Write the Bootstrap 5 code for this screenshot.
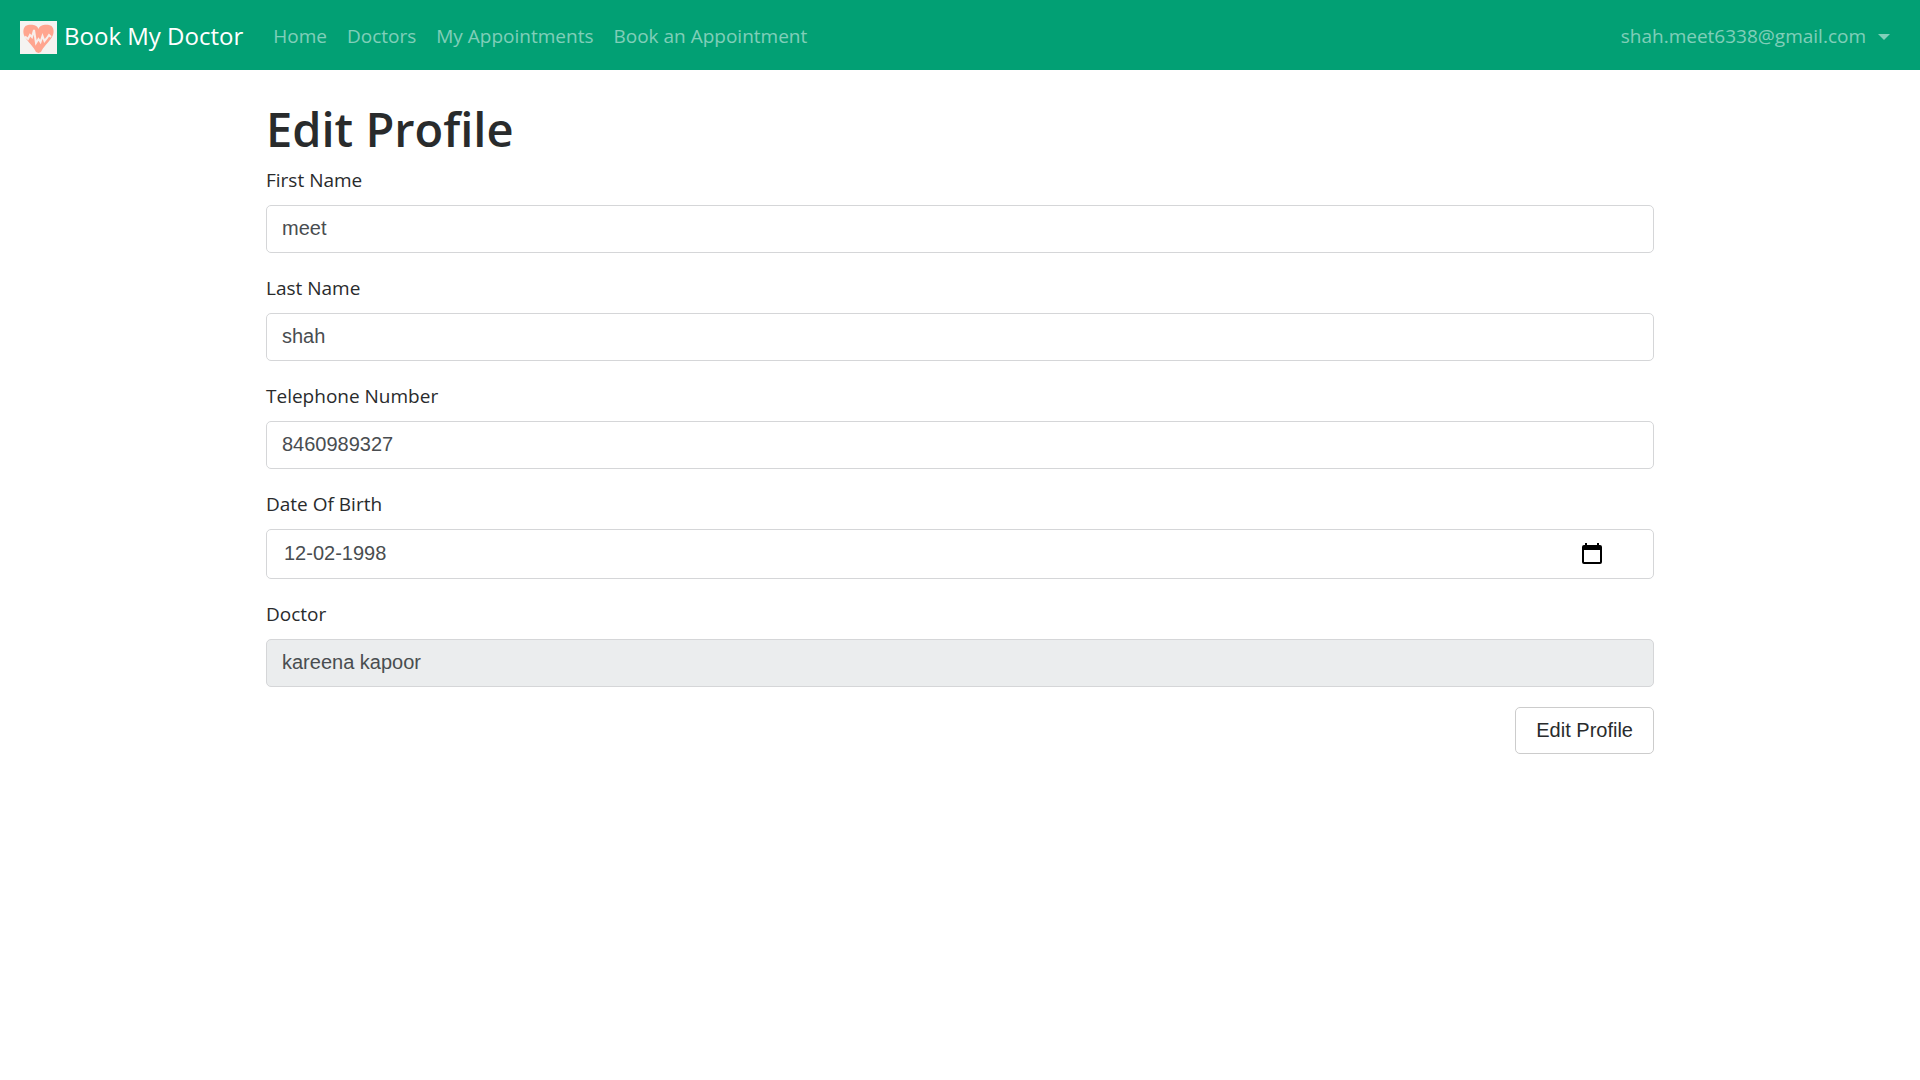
<!DOCTYPE html>
<html lang="en">
<head>
<meta charset="utf-8">
<meta name="viewport" content="width=device-width, initial-scale=1">
<title>Book My Doctor - Edit Profile</title>
<link href="https://cdn.jsdelivr.net/npm/bootstrap@5.3.0/dist/css/bootstrap.min.css" rel="stylesheet">
<style>
  body { font-family: "Segoe UI", "Open Sans", sans-serif; font-size: 19px; line-height: 30px; color: #292b2c; }
  .site-nav { background: #02a074; padding: 11px 20px 9px; --bs-navbar-nav-link-padding-x: 10px; }
  .site-nav .navbar-brand { font-size: 24px; line-height: 38px; padding: 6px 0; margin-right: 20px; gap: 7px; }
  .site-nav .nav-link { padding-top: 10px; padding-bottom: 10px; color: rgba(255, 255, 255, .5); }
  .site-nav .nav-link:hover { color: rgba(255, 255, 255, .75); }
  .site-nav .dropdown-toggle::after { margin-left: 12px; vertical-align: 3px; border-width: 6px; border-bottom: 0; }
  .brand-logo { width: 37px; height: 33px; margin-top: 3px; }
  .profile-page { max-width: 1424px; padding: 30px 18px; }
  .profile-title { font-size: 47px; font-weight: 600; line-height: 58px; margin-bottom: 7px; }
  .field-group { margin-bottom: 20px; }
  .field-group .form-label { display: block; margin-bottom: 10px; }
  .field-group .form-control { font: 20px/30px "Liberation Sans", Arial, sans-serif; color: #494d50; border-color: #d5d6d8; border-radius: 5px; padding: 7px 15px 9px; }
  .field-group .form-control:disabled { background: #ebedee; opacity: 1; }
  .field-group .date-control { padding: 8px 90px 10px 17px; }
  .calendar-btn { right: 48px; }
  .save-btn { font: 20px/30px "Liberation Sans", Arial, sans-serif; color: #292b2c; background: #fff; border-color: #ccc; border-radius: 5px; padding: 7px 20px 8px; }
</style>
<script src="https://cdn.jsdelivr.net/npm/bootstrap@5.3.0/dist/js/bootstrap.bundle.min.js" defer></script>
</head>
<body>
<nav class="navbar navbar-expand-lg navbar-dark site-nav">
  <a class="navbar-brand d-flex align-items-center" href="#">
    <svg class="brand-logo" viewBox="0 0 37 33" aria-hidden="true">
      <rect width="37" height="33" fill="#f5f3f1"/>
      <path d="M18.500 8C17 3 9 3 5.500 5C2.500 8 3 13 5 16C8 21 14 26 16 31L18.500 32L21 31C23 26 29 21 32 16C34 13 34.500 8 31.500 5C28 3 20 3 18.500 8Z" fill="#ffa58f"/>
      <path d="M5 15.500L8 18L10 14L12 16L14 9L16 22L18.500 18L20.500 21L22.500 15L24.500 20L27 17L29 14L31 16" fill="none" stroke="#f8eeeb" stroke-width="2"/>
    </svg>
    <span>Book My Doctor</span>
  </a>
  <button class="navbar-toggler" type="button" data-bs-toggle="collapse" data-bs-target="#mainNav" aria-controls="mainNav" aria-expanded="false" aria-label="Toggle navigation"><span class="navbar-toggler-icon"></span></button>
  <div class="collapse navbar-collapse" id="mainNav">
    <ul class="navbar-nav me-auto">
      <li class="nav-item"><a class="nav-link" href="#">Home</a></li>
      <li class="nav-item"><a class="nav-link" href="#">Doctors</a></li>
      <li class="nav-item"><a class="nav-link" href="#">My Appointments</a></li>
      <li class="nav-item"><a class="nav-link" href="#">Book an Appointment</a></li>
    </ul>
    <ul class="navbar-nav">
      <li class="nav-item dropdown">
        <a class="nav-link dropdown-toggle" href="#" role="button" data-bs-toggle="dropdown" aria-expanded="false">shah.meet6338@gmail.com</a>
        <ul class="dropdown-menu dropdown-menu-end"></ul>
      </li>
    </ul>
  </div>
</nav>
<main class="container-fluid profile-page">
  <h1 class="profile-title">Edit Profile</h1>
  <form>
    <div class="field-group">
      <label class="form-label" for="firstName">First Name</label>
      <input class="form-control" type="text" id="firstName" value="meet">
    </div>
    <div class="field-group">
      <label class="form-label" for="lastName">Last Name</label>
      <input class="form-control" type="text" id="lastName" value="shah">
    </div>
    <div class="field-group">
      <label class="form-label" for="phone">Telephone Number</label>
      <input class="form-control" type="tel" id="phone" value="8460989327">
    </div>
    <div class="field-group">
      <label class="form-label" for="birthDate">Date Of Birth</label>
      <div class="position-relative">
        <input class="form-control date-control" type="text" id="birthDate" value="12-02-1998">
        <button class="calendar-btn btn p-1 border-0 lh-1 position-absolute top-50 translate-middle-y" type="button" aria-label="Choose date">
          <svg class="d-block" width="20" height="22" viewBox="0 0 20 22" aria-hidden="true"><path fill-rule="evenodd" d="M3 0H5V2H15V0H17V2H18Q20 2 20 4V19Q20 21 18 21H2Q0 21 0 19V4Q0 2 2 2H3ZM2 7V19H18V7Z"/></svg>
        </button>
      </div>
    </div>
    <div class="field-group">
      <label class="form-label" for="doctor">Doctor</label>
      <input class="form-control" type="text" id="doctor" value="kareena kapoor" disabled>
    </div>
    <div class="d-flex justify-content-end">
      <button class="btn save-btn" type="submit">Edit Profile</button>
    </div>
  </form>
</main>
</body>
</html>
